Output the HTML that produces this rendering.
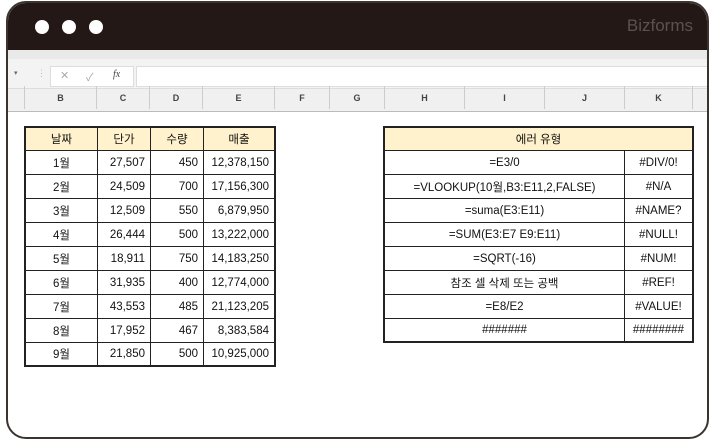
<!DOCTYPE html>
<html><head><meta charset="utf-8"><style>
*{margin:0;padding:0;box-sizing:border-box}
body{width:715px;height:440px;background:#fff;position:relative;overflow:hidden;font-family:"Liberation Sans","Noto Sans CJK KR",sans-serif;}
.frame{position:absolute;left:6px;top:1px;width:703px;height:438px;border:2px solid #3a3330;border-radius:20px;overflow:hidden;background:#fff}
.title{position:absolute;left:0;top:0;width:100%;height:47px;background:#231815}
.dot{position:absolute;top:17px;width:14px;height:14px;border-radius:50%;background:#fff}
.brand{position:absolute;right:14px;top:13px;color:#5a5250;font-size:17px}
.a{position:absolute}
.cell{position:absolute;border:1px solid #222;font-size:11.5px;color:#111;display:flex;align-items:center;white-space:nowrap}
.hd{background:#fff2cc;justify-content:center}
.c{justify-content:center}.r{justify-content:flex-end;padding-right:5px}
.col{position:absolute;top:86px;height:23px;font-size:9px;font-weight:bold;color:#444;display:flex;align-items:center;justify-content:center;border-right:1px solid #ccc}
</style></head><body>
<div class="frame">
<div class="title"><div class="dot" style="left:27px"></div><div class="dot" style="left:54px"></div><div class="dot" style="left:81px"></div><div class="brand">Bizforms</div></div>
<div class="a" style="left:0;top:47px;width:100%;height:9px;background:#e9e9e9"></div>
<div class="a" style="left:0;top:56px;width:100%;height:29px;background:#f3f3f3"></div>
<div class="a" style="left:6px;top:66px;font-size:7px;color:#666">▾</div>
<div class="a" style="left:29px;top:65px;font-size:9px;color:#bbb">⋮</div>
<div class="a" style="left:42px;top:63px;width:84px;height:21px;background:#fff;border:1px solid #ddd"></div>
<div class="a" style="left:52px;top:66px;font-size:11px;color:#aaa">✕</div>
<div class="a" style="left:78px;top:66px;font-size:11px;color:#aaa">✓</div>
<div class="a" style="left:105px;top:66px;font-size:10px;color:#444;font-style:italic;font-family:'Liberation Serif',serif">fx</div>
<div class="a" style="left:128px;top:63px;width:580px;height:21px;background:#fff;border:1px solid #ddd"></div>
<div class="a" style="left:0;top:85px;width:100%;height:24px;background:#f0f0f0;border-top:1px solid #ddd;border-bottom:1px solid #bbb"></div>
</div>
<div class="col" style="left:25px;width:72px">B</div>
<div class="col" style="left:97px;width:53px">C</div>
<div class="col" style="left:150px;width:53px">D</div>
<div class="col" style="left:203px;width:72px">E</div>
<div class="col" style="left:275px;width:55px">F</div>
<div class="col" style="left:330px;width:55px">G</div>
<div class="col" style="left:385px;width:80px">H</div>
<div class="col" style="left:465px;width:80px">I</div>
<div class="col" style="left:545px;width:80px">J</div>
<div class="col" style="left:625px;width:68px">K</div>
<div class="a" style="left:8px;top:86px;width:17px;height:23px;border-right:1px solid #ccc"></div>

<div class="cell hd" style="left:24px;top:126px;width:74px;height:25px;border-width:2px 1px 1px 2px">날짜</div>
<div class="cell hd" style="left:97px;top:126px;width:54px;height:25px;border-top-width:2px">단가</div>
<div class="cell hd" style="left:150px;top:126px;width:54px;height:25px;border-top-width:2px">수량</div>
<div class="cell hd" style="left:203px;top:126px;width:73px;height:25px;border-width:2px 2px 1px 1px">매출</div>
<div id="L"></div>
<div class="cell hd" style="left:383px;top:126px;width:311px;height:25px;border-width:2px 2px 1px 2px">에러 유형</div>
<div id="R"></div>
<script>
var d=[["1월","27,507","450","12,378,150"],["2월","24,509","700","17,156,300"],["3월","12,509","550","6,879,950"],["4월","26,444","500","13,222,000"],["5월","18,911","750","14,183,250"],["6월","31,935","400","12,774,000"],["7월","43,553","485","21,123,205"],["8월","17,952","467","8,383,584"],["9월","21,850","500","10,925,000"]];
var h="";d.forEach(function(r,i){var t=150+i*24,last=i==8?2:1;
h+='<div class="cell c" style="left:24px;top:'+t+'px;width:74px;height:25px;border-width:1px 1px '+last+'px 2px">'+r[0]+'</div>';
h+='<div class="cell r" style="left:97px;top:'+t+'px;width:54px;height:25px;border-bottom-width:'+last+'px">'+r[1]+'</div>';
h+='<div class="cell r" style="left:150px;top:'+t+'px;width:54px;height:25px;border-bottom-width:'+last+'px">'+r[2]+'</div>';
h+='<div class="cell r" style="left:203px;top:'+t+'px;width:73px;height:25px;border-width:1px 2px '+last+'px 1px">'+r[3]+'</div>';});
document.getElementById("L").outerHTML=h;
var e=[["=E3/0","#DIV/0!"],["=VLOOKUP(10월,B3:E11,2,FALSE)","#N/A"],["=suma(E3:E11)","#NAME?"],["=SUM(E3:E7 E9:E11)","#NULL!"],["=SQRT(-16)","#NUM!"],["참조 셀 삭제 또는 공백","#REF!"],["=E8/E2","#VALUE!"],["#######","########"]];
h="";e.forEach(function(r,i){var t=150+i*24,last=i==7?2:1;
h+='<div class="cell c" style="left:383px;top:'+t+'px;width:242px;height:25px;border-width:1px 1px '+last+'px 2px">'+r[0]+'</div>';
h+='<div class="cell c" style="left:624px;top:'+t+'px;width:70px;height:25px;border-width:1px 2px '+last+'px 1px">'+r[1]+'</div>';});
document.getElementById("R").outerHTML=h;
</script>
</body></html>
